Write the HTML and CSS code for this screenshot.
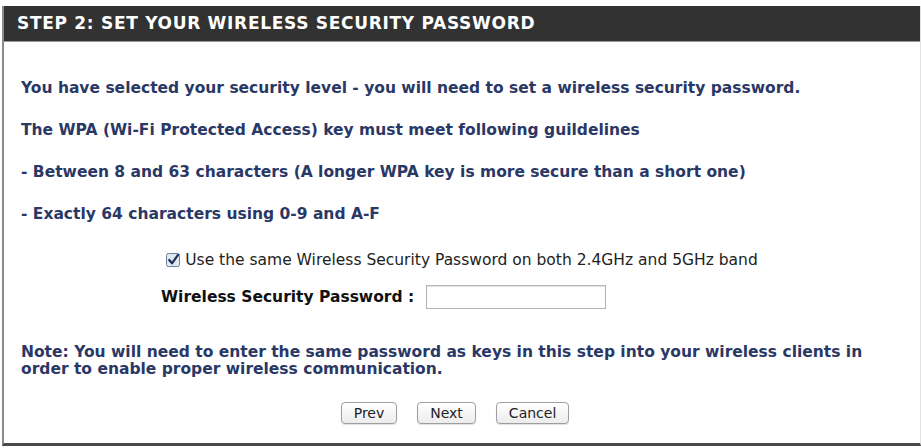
FILE: index.html
```html
<!DOCTYPE html>
<html>
<head>
<meta charset="utf-8">
<link rel="stylesheet" href="styles.css">
</head>
<body>
<div class="box">
  <div class="head">STEP 2: SET YOUR WIRELESS SECURITY PASSWORD</div>
  <div class="content">
    <p class="msg first">You have selected your security level - you will need to set a wireless security password.</p>
    <p class="msg">The WPA (Wi-Fi Protected Access) key must meet following guildelines</p>
    <p class="msg">- Between 8 and 63 characters (A longer WPA key is more secure than a short one)</p>
    <p class="msg">- Exactly 64 characters using 0-9 and A-F</p>
    <div class="check-row">
      <span class="cb"><svg width="14" height="14" viewBox="0 0 14 14"><rect x="0.5" y="0.5" width="13" height="13" rx="2" fill="#dfe7f2" stroke="#6d7f9c"/><path d="M3.2 7 L6 10.3 L12 1.8" fill="none" stroke="#1d2f55" stroke-width="2.2" stroke-linecap="round" stroke-linejoin="round"/></svg></span>
      <span class="cb-label">Use the same Wireless Security Password on both 2.4GHz and 5GHz band</span>
    </div>
    <div class="pw-row">
      <span class="pw-label">Wireless Security Password :</span>
      <span class="pw-input"></span>
    </div>
    <p class="note">Note: You will need to enter the same password as keys in this step into your wireless clients in order to enable proper wireless communication.</p>
    <div class="buttons">
      <span class="btn">Prev</span>
      <span class="btn">Next</span>
      <span class="btn">Cancel</span>
    </div>
  </div>
</div>
</body>
</html>
```
FILE: styles.css
```css
html, body {
  margin: 0;
  padding: 0;
  background: #ffffff;
}
.box {
  margin: 6px 0 0 2px;
  width: 916px;
  height: 437px;
  border-left: 2px solid #8a8a8a;
  border-right: 1px solid #e2e2e2;
  border-bottom: 3px solid #4a4a4a;
  display: flex;
  flex-direction: column;
}
.head {
  height: 35px;
  line-height: 35px;
  background: #323232;
  border-bottom: 1px solid #9a9a9a;
  color: #ffffff;
  font-family: "DejaVu Sans", Verdana, sans-serif;
  font-weight: bold;
  font-size: 17px;
  letter-spacing: 0.7px;
  padding-left: 13px;
}
.content {
  padding: 0 17px;
  font-family: "DejaVu Sans", Verdana, sans-serif;
  font-size: 15.5px;
  color: #2a3866;
}
.msg {
  margin: 0;
  font-weight: bold;
  line-height: 18px;
  margin-top: 24px;
}
.msg.first {
  margin-top: 37px;
}
.check-row {
  display: flex;
  align-items: center;
  justify-content: center;
  gap: 5px;
  margin-top: 28px;
  color: #222;
  line-height: 18px;
}
.cb { display: flex; }
.pw-row {
  display: flex;
  align-items: center;
  gap: 12px;
  margin-top: 16px;
  padding-left: 140px;
}
.pw-label {
  font-weight: bold;
  color: #111;
}
.pw-input {
  width: 178px;
  height: 22px;
  border: 1px solid #b5b5b5;
  box-shadow: inset 0 1px 1px rgba(0,0,0,0.12);
}
.note {
  margin: 35px 0 0;
  font-weight: bold;
  line-height: 17px;
}
.buttons {
  display: flex;
  justify-content: center;
  gap: 20px;
  margin-top: 24px;
  padding-right: 14px;
}
.btn {
  font-family: "DejaVu Sans", Verdana, sans-serif;
  font-size: 14px;
  line-height: 16px;
  color: #222;
  padding: 2px 12px;
  border: 1px solid #9e9e9e;
  border-radius: 4px;
  background: linear-gradient(#ffffff, #ececec);
  box-shadow: 0 1px 1px rgba(0,0,0,0.12);
}
```
